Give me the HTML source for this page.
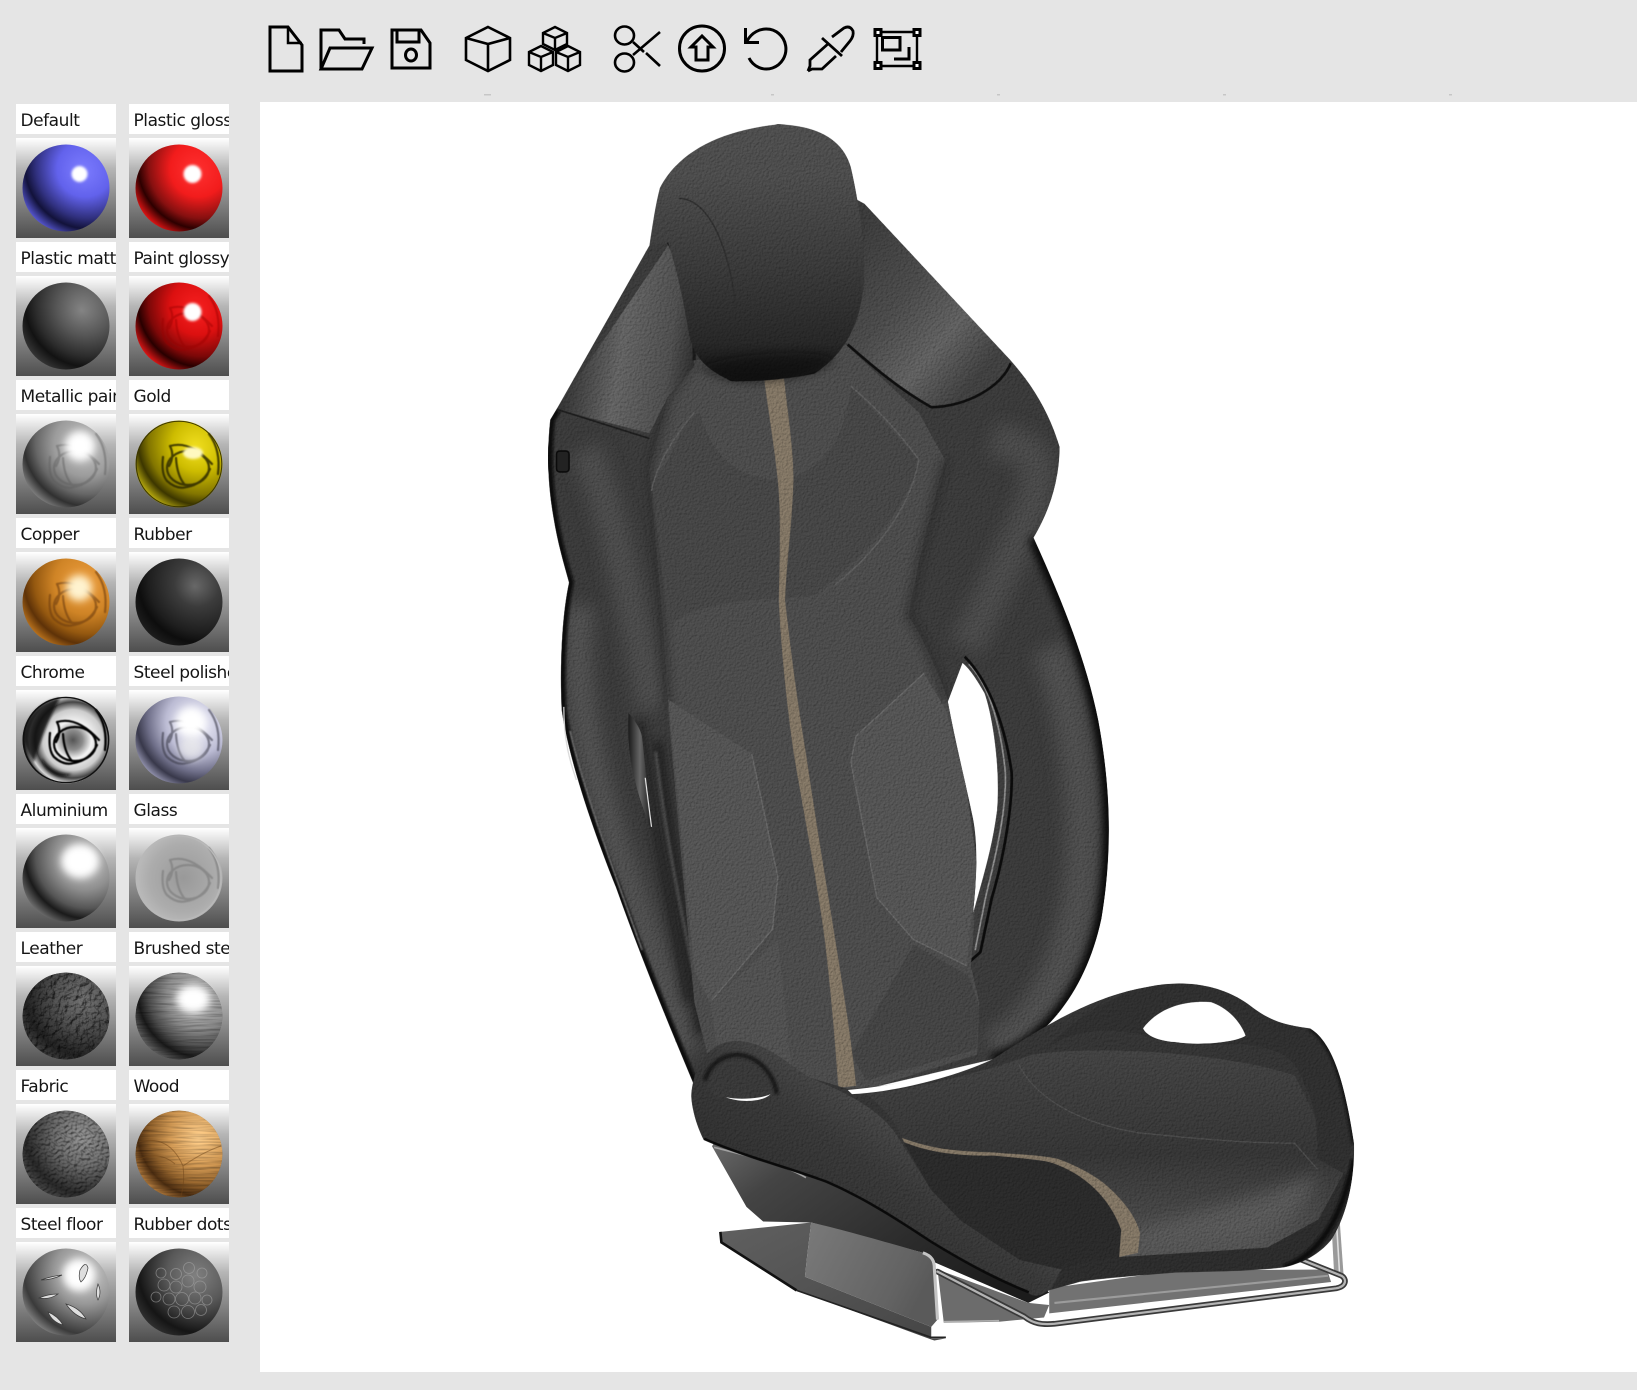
<!DOCTYPE html>
<html><head><meta charset="utf-8"><title>Material viewer</title>
<style>
html,body{margin:0;padding:0;background:#e5e5e5;width:1637px;height:1390px;overflow:hidden}
#view{position:absolute;left:260px;top:102px;width:1377px;height:1270px;background:#fff}
svg{position:absolute;left:0;top:0}
.l{position:absolute;width:95.5px;height:30px;padding-left:4.5px;background:#fff;overflow:hidden;white-space:nowrap;font:17px/34px "DejaVu Sans",sans-serif;letter-spacing:-.45px;color:#151515}
</style></head><body>
<div id="view"></div>
<div class="l" style="left:16px;top:104px">Default</div><div class="l" style="left:129px;top:104px">Plastic glossy</div>
<div class="l" style="left:16px;top:242px">Plastic matt</div><div class="l" style="left:129px;top:242px">Paint glossy</div>
<div class="l" style="left:16px;top:380px">Metallic paint</div><div class="l" style="left:129px;top:380px">Gold</div>
<div class="l" style="left:16px;top:518px">Copper</div><div class="l" style="left:129px;top:518px">Rubber</div>
<div class="l" style="left:16px;top:656px">Chrome</div><div class="l" style="left:129px;top:656px">Steel polished</div>
<div class="l" style="left:16px;top:794px">Aluminium</div><div class="l" style="left:129px;top:794px">Glass</div>
<div class="l" style="left:16px;top:932px">Leather</div><div class="l" style="left:129px;top:932px">Brushed steel</div>
<div class="l" style="left:16px;top:1070px">Fabric</div><div class="l" style="left:129px;top:1070px">Wood</div>
<div class="l" style="left:16px;top:1208px">Steel floor</div><div class="l" style="left:129px;top:1208px">Rubber dots</div>

<svg width="1637" height="1390" viewBox="0 0 1637 1390" xmlns="http://www.w3.org/2000/svg">
<defs>
<linearGradient id="bg" x1="0" y1="0" x2="0" y2="1"><stop offset="0" stop-color="#fff"/><stop offset=".08" stop-color="#ececec"/><stop offset=".3" stop-color="#b6b6b6"/><stop offset=".6" stop-color="#8a8a8a"/><stop offset="1" stop-color="#4e4e4e"/></linearGradient>
<radialGradient id="m1" cx=".8" cy=".2" r="1" fx=".68" fy=".32"><stop offset="0" stop-color="#7c7cff"/><stop offset=".32" stop-color="#6262ec"/><stop offset=".6" stop-color="#30307e"/><stop offset=".74" stop-color="#12123a"/><stop offset=".92" stop-color="#5a5ad8"/></radialGradient>
<radialGradient id="m2" cx=".8" cy=".2" r="1" fx=".68" fy=".32"><stop offset="0" stop-color="#ff3030"/><stop offset=".32" stop-color="#f21c1c"/><stop offset=".6" stop-color="#861010"/><stop offset=".74" stop-color="#2c0000"/><stop offset=".92" stop-color="#ec1616"/></radialGradient>
<radialGradient id="m3" cx=".8" cy=".2" r="1" fx=".68" fy=".32"><stop offset="0" stop-color="#848484"/><stop offset=".32" stop-color="#575757"/><stop offset=".6" stop-color="#2c2c2c"/><stop offset=".74" stop-color="#121212"/><stop offset=".95" stop-color="#3e3e3e"/></radialGradient>
<radialGradient id="m4" cx=".8" cy=".2" r="1" fx=".68" fy=".32"><stop offset="0" stop-color="#f82020"/><stop offset=".32" stop-color="#dc1010"/><stop offset=".6" stop-color="#7c0808"/><stop offset=".74" stop-color="#280000"/><stop offset=".92" stop-color="#e81818"/></radialGradient>
<radialGradient id="m5" cx=".8" cy=".2" r="1" fx=".68" fy=".32"><stop offset="0" stop-color="#c4c4c4"/><stop offset=".36" stop-color="#9c9c9c"/><stop offset=".6" stop-color="#666"/><stop offset=".76" stop-color="#303030"/><stop offset=".95" stop-color="#929292"/></radialGradient>
<radialGradient id="m6" cx=".8" cy=".2" r="1" fx=".68" fy=".32"><stop offset="0" stop-color="#f2e020"/><stop offset=".3" stop-color="#cdbc00"/><stop offset=".6" stop-color="#827500"/><stop offset=".74" stop-color="#3c3600"/><stop offset=".95" stop-color="#e4d414"/></radialGradient>
<radialGradient id="m7" cx=".8" cy=".2" r="1" fx=".68" fy=".32"><stop offset="0" stop-color="#f0a040"/><stop offset=".36" stop-color="#cf8426"/><stop offset=".62" stop-color="#945810"/><stop offset=".76" stop-color="#5e3208"/><stop offset=".95" stop-color="#d08222"/></radialGradient>
<radialGradient id="m8" cx=".8" cy=".2" r="1" fx=".68" fy=".32"><stop offset="0" stop-color="#686868"/><stop offset=".26" stop-color="#3c3c3c"/><stop offset=".6" stop-color="#1e1e1e"/><stop offset=".74" stop-color="#0d0d0d"/><stop offset=".95" stop-color="#222"/></radialGradient>
<radialGradient id="m9" cx=".58" cy=".5" r=".56"><stop offset="0" stop-color="#555"/><stop offset=".2" stop-color="#8c8c8c"/><stop offset=".38" stop-color="#f2f2f2"/><stop offset=".62" stop-color="#ccc"/><stop offset=".78" stop-color="#444"/><stop offset=".9" stop-color="#d8d8d8"/><stop offset="1" stop-color="#222"/></radialGradient>
<radialGradient id="m10" cx=".8" cy=".2" r="1" fx=".66" fy=".36"><stop offset="0" stop-color="#f6f6ff"/><stop offset=".36" stop-color="#bcbcd4"/><stop offset=".6" stop-color="#70708a"/><stop offset=".76" stop-color="#38384a"/><stop offset=".95" stop-color="#acacca"/></radialGradient>
<radialGradient id="m11" cx=".8" cy=".2" r="1" fx=".68" fy=".32"><stop offset="0" stop-color="#ccc"/><stop offset=".36" stop-color="#8e8e8e"/><stop offset=".6" stop-color="#555"/><stop offset=".74" stop-color="#1a1a1a"/><stop offset=".95" stop-color="#808080"/></radialGradient>
<radialGradient id="m12" cx=".55" cy=".5" r=".65"><stop offset="0" stop-color="#999"/><stop offset=".6" stop-color="#acacac"/><stop offset="1" stop-color="#c4c4c4"/></radialGradient>
<radialGradient id="m13" cx=".8" cy=".2" r="1" fx=".68" fy=".32"><stop offset="0" stop-color="#666"/><stop offset=".36" stop-color="#4a4a4a"/><stop offset=".74" stop-color="#1f1f1f"/><stop offset=".95" stop-color="#404040"/></radialGradient>
<radialGradient id="m14" cx=".8" cy=".2" r="1" fx=".68" fy=".32"><stop offset="0" stop-color="#b0b0b0"/><stop offset=".36" stop-color="#888"/><stop offset=".6" stop-color="#4a4a4a"/><stop offset=".74" stop-color="#181818"/><stop offset=".95" stop-color="#6c6c6c"/></radialGradient>
<radialGradient id="m15" cx=".8" cy=".2" r="1" fx=".68" fy=".32"><stop offset="0" stop-color="#848484"/><stop offset=".36" stop-color="#626262"/><stop offset=".74" stop-color="#252525"/><stop offset=".95" stop-color="#464646"/></radialGradient>
<radialGradient id="m16" cx=".8" cy=".2" r="1" fx=".72" fy=".32"><stop offset="0" stop-color="#f2c484"/><stop offset=".36" stop-color="#c89250"/><stop offset=".6" stop-color="#8c5e2a"/><stop offset=".76" stop-color="#4a2c10"/><stop offset=".95" stop-color="#c08644"/></radialGradient>
<radialGradient id="m17" cx=".8" cy=".2" r="1" fx=".68" fy=".32"><stop offset="0" stop-color="#d0d0d0"/><stop offset=".36" stop-color="#989898"/><stop offset=".76" stop-color="#3a3a3a"/><stop offset=".95" stop-color="#909090"/></radialGradient>
<radialGradient id="m18" cx=".8" cy=".2" r="1" fx=".68" fy=".32"><stop offset="0" stop-color="#808080"/><stop offset=".36" stop-color="#585858"/><stop offset=".74" stop-color="#151515"/><stop offset=".95" stop-color="#363636"/></radialGradient>
<filter id="b05" x="-10%" y="-10%" width="120%" height="120%"><feGaussianBlur stdDeviation=".45"/></filter>
<filter id="b1" x="-30%" y="-30%" width="160%" height="160%"><feGaussianBlur stdDeviation="1.2"/></filter>
<filter id="b3" x="-60%" y="-60%" width="220%" height="220%"><feGaussianBlur stdDeviation="4"/></filter>
<filter id="b8" x="-40%" y="-40%" width="180%" height="180%"><feGaussianBlur stdDeviation="8"/></filter>
<filter id="tLea" x="0" y="0" width="100%" height="100%" color-interpolation-filters="sRGB"><feTurbulence type="fractalNoise" baseFrequency=".16" numOctaves="3" seed="4" result="n"/><feDiffuseLighting in="n" surfaceScale="2.8" diffuseConstant="1" lighting-color="#fff" result="l"><feDistantLight azimuth="45" elevation="65"/></feDiffuseLighting><feComposite in="SourceGraphic" in2="l" operator="arithmetic" k1="1.15" result="c"/><feComposite in="c" in2="SourceAlpha" operator="in"/></filter>
<filter id="tFab" x="0" y="0" width="100%" height="100%" color-interpolation-filters="sRGB"><feTurbulence type="fractalNoise" baseFrequency=".3 .34" numOctaves="1" seed="9" result="n"/><feDiffuseLighting in="n" surfaceScale="1.7" diffuseConstant="1" lighting-color="#fff" result="l"><feDistantLight azimuth="60" elevation="65"/></feDiffuseLighting><feComposite in="SourceGraphic" in2="l" operator="arithmetic" k1="1.15" result="c"/><feComposite in="c" in2="SourceAlpha" operator="in"/></filter>
<filter id="tBr" x="0" y="0" width="100%" height="100%" color-interpolation-filters="sRGB"><feTurbulence type="fractalNoise" baseFrequency=".03 .35" numOctaves="2" seed="2" result="n"/><feDiffuseLighting in="n" surfaceScale=".6" diffuseConstant="1" lighting-color="#fff" result="l"><feDistantLight azimuth="90" elevation="65"/></feDiffuseLighting><feComposite in="SourceGraphic" in2="l" operator="arithmetic" k1="1.1" result="c"/><feComposite in="c" in2="SourceAlpha" operator="in"/></filter>
<filter id="lea" x="0" y="0" width="100%" height="100%" color-interpolation-filters="sRGB"><feTurbulence type="fractalNoise" baseFrequency=".42" numOctaves="2" seed="3" result="n"/><feDiffuseLighting in="n" surfaceScale=".5" diffuseConstant="1" lighting-color="#fff" result="l"><feDistantLight azimuth="45" elevation="65"/></feDiffuseLighting><feComposite in="SourceGraphic" in2="l" operator="arithmetic" k1="1.12" result="c"/><feComposite in="c" in2="SourceAlpha" operator="in"/></filter>
<g id="arcs" fill="none" stroke-width="2.2" stroke-linecap="round" filter="url(#b05)"><ellipse cx="9" cy="4" rx="21" ry="17"/><path d="M-16-7Q-18 10-12 17Q-2 26 8 23Q24 20 31 5"/><path d="M-9-18Q-4-8-10 2"/><path d="M-9-18Q11-24 33 0"/><path d="M-3-6Q-2 12 6 21"/><path d="M30-30Q42-14 39 10"/></g>

<linearGradient id="head" x1="0" y1="0" x2="0" y2="1"><stop offset="0" stop-color="#4e4e4e"/><stop offset=".2" stop-color="#4c4c4c"/><stop offset=".55" stop-color="#3a3a3a"/><stop offset=".85" stop-color="#272727"/><stop offset="1" stop-color="#101010"/></linearGradient>
<linearGradient id="wl" x1="0" y1=".55" x2="1" y2=".75"><stop offset="0" stop-color="#2a2a2a"/><stop offset=".45" stop-color="#626262"/><stop offset=".8" stop-color="#4e4e4e"/><stop offset="1" stop-color="#2a2a2a"/></linearGradient>
<linearGradient id="wr" x1="0" y1=".1" x2=".75" y2=".9"><stop offset="0" stop-color="#3a3a3a"/><stop offset=".45" stop-color="#4a4a4a"/><stop offset=".75" stop-color="#606060"/><stop offset="1" stop-color="#404040"/></linearGradient>
<linearGradient id="shell" x1="0" y1="0" x2="1" y2=".7"><stop offset="0" stop-color="#6e6e6e"/><stop offset=".25" stop-color="#444"/><stop offset=".7" stop-color="#2b2b2b"/><stop offset="1" stop-color="#1c1c1c"/></linearGradient>
<linearGradient id="bracket" x1="0" y1="0" x2="1" y2=".4"><stop offset="0" stop-color="#7a7a7a"/><stop offset=".8" stop-color="#636363"/><stop offset="1" stop-color="#5a5a5a"/></linearGradient>
<linearGradient id="plate" x1="0" y1="0" x2="1" y2="1"><stop offset="0" stop-color="#606060"/><stop offset="1" stop-color="#454545"/></linearGradient>
<linearGradient id="panelR" x1="0" y1="0" x2="0" y2="1"><stop offset="0" stop-color="#424242"/><stop offset=".5" stop-color="#353535"/><stop offset="1" stop-color="#525252"/></linearGradient>
<linearGradient id="armL" x1="0" y1="1" x2="1" y2="0"><stop offset="0" stop-color="#222"/><stop offset=".5" stop-color="#383838"/><stop offset=".8" stop-color="#5c5c5c"/><stop offset="1" stop-color="#3a3a3a"/></linearGradient>
<linearGradient id="strip" x1="0" y1="0" x2="1" y2="0"><stop offset="0" stop-color="#1a1a1a"/><stop offset=".5" stop-color="#666"/><stop offset="1" stop-color="#1a1a1a"/></linearGradient>
<clipPath id="cBack"><path clip-rule="evenodd" d="M622 235L533 392L527 402C524 430 524 460 530 495C534 520 540 540 545 558C538 590 536 640 538 680C545 730 570 800 590 850C615 920 640 980 665 1040L800 1050L950 1015C1000 1000 1040 950 1055 880C1065 820 1065 760 1052 690C1040 630 1015 570 990 515C1005 490 1015 460 1015 428C1005 395 990 370 968 345L828 195L800 180ZM922 635L908 672C915 710 925 750 931 779C936 800 937 830 932 875C940 845 950 815 955 776C958 740 952 690 943 664C936 652 930 642 922 635Z"/></clipPath>
<clipPath id="cCush"><path clip-rule="evenodd" d="M662 1050C664 1020 680 998 705 997C735 998 755 1020 775 1032L812 1043C860 1040 910 1030 950 1015C990 990 1040 955 1100 945C1140 937 1175 945 1200 965C1220 980 1235 982 1255 985C1280 1000 1290 1050 1297 1095C1298 1130 1290 1165 1275 1188C1262 1203 1247 1210 1230 1214C1200 1218 1160 1218 1126 1219C1090 1222 1050 1225 1034 1228C1020 1232 1012 1234 1005 1236C995 1243 990 1242 985 1239C950 1225 920 1208 892 1191C860 1170 830 1150 791 1133C750 1118 710 1108 674 1092C668 1080 663 1065 662 1050ZM1095 985C1110 965 1135 958 1160 960C1175 965 1188 978 1193 992C1185 998 1150 1002 1125 998C1110 997 1098 992 1095 985Z"/></clipPath>
</defs>

<!-- toolbar icons -->
<g fill="none" stroke="#000" stroke-width="3" stroke-linejoin="miter">
<path d="M270 27H288L302 45V71H270Z"/><path d="M288 27V43H302" stroke-width="2.5"/>
<path d="M321 69V30H339L345 39H364V44" stroke-width="3"/><path d="M321 69L330 48H372L362 69Z" stroke-width="3"/>
<path d="M392 30H421L430 43V68H392Z"/><path d="M397 30V42H419V30"/><ellipse cx="411" cy="55" rx="5.5" ry="6"/>
<g stroke-width="2.6"><path d="M488 27L510 38V60L488 71L466 60V38Z"/><path d="M466 38L488 44L510 38M488 44V71"/></g>
<g stroke-width="2.4"><path d="M555 27L567 33V44L555 50L543 44V33Z"/><path d="M543 33L555 38L567 33M555 38V50"/><path d="M541 46L553 52V65L541 71L529 65V52Z"/><path d="M529 52L541 57L553 52M541 57V71"/><path d="M568 46L580 52V65L568 71L556 65V52Z"/><path d="M556 52L568 57L580 52M568 57V71"/></g>
<g stroke-width="2.6"><ellipse cx="624.5" cy="35.5" rx="9.5" ry="9"/><ellipse cx="624.5" cy="62.5" rx="9.5" ry="9"/><path d="M660 32L633 55M633 42L644 52M646 53L660 66"/></g>
<circle cx="702" cy="48.5" r="22.5"/><path d="M702 36L691 47H696V60H708V47H713Z"/>
<path d="M745.5 28V42.5H759"/><path d="M747 41C752 32 760 29 766 29A19.5 20 0 1 1 749 58"/>
<g stroke-width="2.8"><path d="M832 37L844 28Q850 25 853 31Q854 36 850 41L841 52"/><path d="M822 38L842 56"/><path d="M829 43L810 60V66L808 71"/><path d="M836 56L822 69H812L808 71"/></g>
<path d="M876 32H918M876 66H918" stroke-width="2.4"/><path d="M877 33V65M917 33V65" stroke-width="2.4"/><path d="M882.5 37.5H900V50H882.5Z"/><path d="M909 47V59H894"/>
</g>
<g fill="#fff" stroke="#000" stroke-width="3"><rect x="875" y="29.5" width="6" height="6"/><rect x="914" y="29.5" width="6" height="6"/><rect x="875" y="62.5" width="6" height="6"/><rect x="914" y="62.5" width="6" height="6"/></g>
<g fill="#c6c6c6"><rect x="484" y="94" width="7" height="1.5"/><rect x="771" y="94" width="3" height="1.5"/><rect x="997" y="94" width="3" height="1.5"/><rect x="1223" y="94" width="3" height="1.5"/><rect x="1449" y="94" width="3" height="1.5"/></g>

<!-- swatch backgrounds -->
<g fill="url(#bg)">
<rect x="16" y="138" width="100" height="100"/><rect x="129" y="138" width="100" height="100"/>
<rect x="16" y="276" width="100" height="100"/><rect x="129" y="276" width="100" height="100"/>
<rect x="16" y="414" width="100" height="100"/><rect x="129" y="414" width="100" height="100"/>
<rect x="16" y="552" width="100" height="100"/><rect x="129" y="552" width="100" height="100"/>
<rect x="16" y="690" width="100" height="100"/><rect x="129" y="690" width="100" height="100"/>
<rect x="16" y="828" width="100" height="100"/><rect x="129" y="828" width="100" height="100"/>
<rect x="16" y="966" width="100" height="100"/><rect x="129" y="966" width="100" height="100"/>
<rect x="16" y="1104" width="100" height="100"/><rect x="129" y="1104" width="100" height="100"/>
<rect x="16" y="1242" width="100" height="100"/><rect x="129" y="1242" width="100" height="100"/>
</g>
<!-- spheres -->
<g transform="translate(66 188)"><circle r="43.5" fill="url(#m1)"/><circle cx="13.5" cy="-14" r="8" fill="#fff" filter="url(#b1)"/></g>
<g transform="translate(179 188)"><circle r="43.5" fill="url(#m2)"/><circle cx="13.5" cy="-14" r="9" fill="#fff" filter="url(#b1)"/></g>
<g transform="translate(66 326)"><circle r="43.5" fill="url(#m3)"/></g>
<g transform="translate(179 326)"><circle r="43.5" fill="url(#m4)"/><use href="#arcs" stroke="#900" opacity=".45"/><circle cx="13.5" cy="-14" r="9" fill="#fff" filter="url(#b1)"/></g>
<g transform="translate(66 464)"><circle r="43.5" fill="url(#m5)"/><use href="#arcs" stroke="#5c5c5c" opacity=".45"/><circle cx="14" cy="-18" r="15" fill="#fff" filter="url(#b3)"/></g>
<g transform="translate(179 464)"><circle r="43.5" fill="url(#m6)"/><use href="#arcs" stroke="#2e2a00" opacity=".85"/><ellipse cx="14" cy="-11" rx="10" ry="6" fill="#fff9c0" filter="url(#b1)"/><circle r="42.8" fill="none" stroke="#3a3500" stroke-width="1"/></g>
<g transform="translate(66 602)"><circle r="43.5" fill="url(#m7)"/><use href="#arcs" stroke="#6e3c0c" opacity=".6"/><circle cx="13" cy="-14" r="13" fill="#fff3cf" filter="url(#b3)"/></g>
<g transform="translate(179 602)"><circle r="43.5" fill="url(#m8)"/></g>
<g transform="translate(66 740)"><circle r="43.5" fill="url(#m9)"/><path d="M-42-2A42 42 0 0 1-6-42Q-22-12-32 22Q-42 8-42-2Z" fill="#0c0c0c" opacity=".85" filter="url(#b1)"/><path d="M-24 18Q-14 34 6 34Q-6 40-16 32Q-24 26-24 18Z" fill="#0c0c0c" opacity=".85" filter="url(#b1)"/><use href="#arcs" stroke="#000"/><circle r="42.6" fill="none" stroke="#111" stroke-width="1.4"/></g>
<g transform="translate(179 740)"><circle r="43.5" fill="url(#m10)"/><use href="#arcs" stroke="#3a3a48" opacity=".6"/><circle cx="12" cy="-18" r="15" fill="#fff" filter="url(#b3)"/><circle cx="12" cy="8" r="12" fill="#eee" opacity=".7" filter="url(#b3)"/></g>
<g transform="translate(66 878)"><circle r="43.5" fill="url(#m11)"/><ellipse cx="14" cy="-17" rx="19" ry="17" fill="#fff" filter="url(#b3)"/></g>
<g transform="translate(179 878)"><circle r="43.5" fill="url(#m12)"/><use href="#arcs" stroke="#7e7e7e" opacity=".7"/><circle r="42" fill="none" stroke="#b8b8b8" stroke-width="1.4"/></g>
<g transform="translate(66 1016)"><circle r="43.5" fill="url(#m13)" filter="url(#tLea)"/></g>
<g transform="translate(179 1016)"><circle r="43.5" fill="url(#m14)" filter="url(#tBr)"/><ellipse cx="14" cy="-17" rx="17" ry="14" fill="#fff" filter="url(#b3)"/></g>
<g transform="translate(66 1154)"><circle r="43.5" fill="url(#m15)" filter="url(#tFab)"/></g>
<g transform="translate(179 1154)"><circle r="43.5" fill="url(#m16)" filter="url(#tBr)"/><path d="M-40-12Q-10-20 4 12Q6 28 2 42M4 12Q24-2 42-8M-42 6Q-20-4-4 10" fill="none" stroke="#6e4318" stroke-width="1" opacity=".5"/></g>
<g transform="translate(66 1292)"><circle r="43.5" fill="url(#m17)"/><circle cx="13" cy="-17" r="16" fill="#fff" filter="url(#b3)"/><path d="M-25-12Q-14-16-4-17Q-14-12-25-12ZM-27 6Q-18 2-8 2Q-16 8-27 6ZM0 12Q14 16 20 27Q8 24 0 12ZM-18 20Q-8 24-3 33Q-14 30-18 20ZM14-22Q20-32 22-24Q20-14 15-10Q12-14 14-22ZM32-8Q36 0 32 8Q29 2 32-8Z" fill="#dedede" stroke="#3c3c3c" stroke-width=".7"/></g>
<g transform="translate(179 1292)"><circle r="43.5" fill="url(#m18)"/><g fill="none" stroke="#a8a8a8" stroke-width=".8" opacity=".6"><circle cx="-3" cy="-5" r="6"/><circle cx="9" cy="-11" r="6"/><circle cx="21" cy="-5" r="6"/><circle cx="3" cy="7" r="6.5"/><circle cx="16" cy="6" r="6"/><circle cx="28" cy="8" r="5"/><circle cx="-10" cy="7" r="6"/><circle cx="-15" cy="-7" r="6"/><circle cx="-3" cy="-18" r="5.5"/><circle cx="10" cy="-24" r="5.5"/><circle cx="23" cy="-19" r="5"/><circle cx="9" cy="20" r="6.5"/><circle cx="-5" cy="20" r="6"/><circle cx="22" cy="18" r="5.5"/><circle cx="-18" cy="-19" r="5"/><circle cx="-23" cy="5" r="5"/></g></g>

<!-- seat -->
<g transform="scale(1.04400)">
 <!-- frame -->
 <path d="M690 1180L777 1171L773 1204L771 1223L892 1271L892 1282H906L895 1284L892 1283L763 1236L691 1190Z" fill="url(#plate)"/>
 <path d="M690 1180L691 1190L763 1236" fill="none" stroke="#111" stroke-width="2.5"/>
 <path d="M763 1236L892 1281L906 1281" fill="none" stroke="#222" stroke-width="1.6"/>
 <path d="M682 1098L715 1156L731 1170L777 1171L884 1200L895 1209L985 1248L1005 1238L950 1190L800 1110L690 1085Z" fill="url(#shell)"/>
 <path d="M684 1099C720 1108 750 1115 772 1128" fill="none" stroke="#a0a0a0" stroke-width="1.6"/>
 <path d="M898 1216L985 1248L1005 1250L1000 1262L957 1266L904 1267Z" fill="#6c6c6c"/>
 <path d="M904 1266L957 1265" stroke="#b0b0b0" stroke-width="1.5" fill="none"/>
 <path d="M1005 1234L1126 1217L1271 1216L1275 1228L1005 1258Z" fill="#727272"/>
 <path d="M1010 1248L1272 1222" stroke="#9c9c9c" stroke-width="2" fill="none"/>
 <path d="M1275 1166L1283 1166L1287 1222L1278 1222Z" fill="#9a9a9a"/>
 <path d="M1280 1168L1283 1218" stroke="#e0e0e0" stroke-width="1.5" fill="none"/>
 <path d="M1235 1202L1285 1222" stroke="#777" stroke-width="4" fill="none"/>
 <g fill="none" stroke-linecap="round" stroke-linejoin="round">
  <path d="M898 1218L981 1261C990 1268 998 1269 1010 1268L1280 1234C1290 1232 1290 1225 1285 1222L1235 1202" stroke="#3a3a3a" stroke-width="5.5"/>
  <path d="M898 1218L981 1261C990 1268 998 1269 1010 1268L1280 1234C1290 1232 1290 1225 1285 1222L1235 1202" stroke="#b4b4b4" stroke-width="2.2"/>
 </g>
 <path d="M777 1171C800 1176 850 1190 884 1200C893 1203 895 1208 895 1215L898 1264L892 1271L771 1223L773 1204Z" fill="url(#bracket)"/>
 <path d="M884 1200C893 1203 895 1208 895 1215L898 1264" fill="none" stroke="#c4c4c4" stroke-width="3"/>

 <g filter="url(#lea)">
 <!-- backrest -->
 <g clip-path="url(#cBack)">
  <rect x="500" y="150" width="600" height="920" fill="#3a3a3a"/>
  <path d="M556 580C548 640 560 720 590 810C610 870 640 950 655 1010" fill="none" stroke="#505050" stroke-width="28" filter="url(#b8)"/>
  <path d="M1005 620C1035 700 1045 800 1030 880C1015 940 990 985 950 1005" fill="none" stroke="#4e4e4e" stroke-width="34" filter="url(#b8)"/>
  <path d="M950 420C985 430 1000 430 990 480C965 540 945 580 925 620" fill="none" stroke="#484848" stroke-width="34" filter="url(#b8)"/>
  <path d="M560 430C580 470 600 550 625 680" fill="none" stroke="#4c4c4c" stroke-width="30" filter="url(#b8)"/>
  <path d="M533 392L527 402C524 430 524 460 530 495C534 520 540 540 545 558C538 590 536 640 538 680C545 730 570 800 590 850C615 920 640 980 665 1040" fill="none" stroke="#080808" stroke-width="9" filter="url(#b1)"/>
  <path d="M546 700C560 760 590 840 615 910" fill="none" stroke="#6a6a6a" stroke-width="1.6" filter="url(#b05)"/>
  <path d="M990 515C1015 570 1040 630 1052 690C1065 760 1065 820 1055 880C1040 950 1000 1000 950 1015" fill="none" stroke="#060606" stroke-width="10" filter="url(#b3)"/>
  <path d="M630 710C640 790 655 880 672 990" fill="none" stroke="#202020" stroke-width="10" filter="url(#b3)"/>
  <path d="M612 690C622 760 640 860 660 960" fill="none" stroke="#202020" stroke-width="8" filter="url(#b3)"/>
  <path d="M628 720C636 790 650 860 664 930" fill="none" stroke="#5a5a5a" stroke-width="2" filter="url(#b1)"/>
  <!-- strip right of hole -->
  <path d="M924 629C945 650 962 690 969 740C970 770 962 820 950 860L939 912L929 921C927 905 929 890 932 875C940 845 950 815 955 776C958 740 952 690 943 664C936 652 930 642 922 635Z" fill="#3c3c3c"/>
  <path d="M928 636C946 655 958 690 963 740C964 775 955 815 945 855L934 910" fill="none" stroke="#8c8c8c" stroke-width="1.6"/>
  <path d="M924 629C945 650 962 690 969 740C970 770 962 820 950 860L939 912L929 921" fill="none" stroke="#0b0b0b" stroke-width="2.6"/>
  <!-- centre -->
  <path d="M665 345L640 380L622 450L635 600L640 680L665 960L680 1020L810 1050L936 1010L938 960L930 925C934 880 937 830 932 800C925 750 915 710 908 672C905 660 885 610 870 590L882 530L905 440L880 395L810 330Z" fill="#4b4b4b"/>
  <path d="M665 345L640 380L622 450L635 600L640 680M905 440L882 530L870 590C885 610 900 650 906 672" fill="none" stroke="#2a2a2a" stroke-width="5" filter="url(#b3)"/>
  <path d="M660 400L625 470L640 600C670 570 760 575 780 570C820 540 870 490 880 440L815 370C810 420 790 450 750 460C700 460 680 430 670 395Z" fill="#454545"/>
  <path d="M665 395C640 425 628 450 624 470M815 370C845 395 865 420 880 440C875 475 850 520 800 560" fill="none" stroke="#5c5c5c" stroke-width="1.4"/>
  <path d="M640 670L720 722L745 840L740 890L680 960L665 930Z" fill="#535353"/>
  <path d="M885 645L820 705L815 730L840 860L875 900L926 925L936 830L925 750L906 680Z" fill="#535353"/>
  <path d="M720 722L745 840L740 890L682 958M885 645L820 705L815 730L840 860L875 900L926 925" fill="none" stroke="#656565" stroke-width="1.3"/>
  <path d="M680 960L745 900L760 1040L690 1025Z" fill="#505050"/>
  <path d="M875 905L928 935L938 965L935 1005L830 1035L815 1010Z" fill="#434343"/>
  <path d="M732 363L751 363C755 400 760 430 760 460C759 500 753 540 752 575C758 630 765 680 772 722C782 790 792 850 800 900C808 950 816 1000 820 1040L803 1042C800 1000 796 950 790 900C782 840 770 780 760 720C753 670 748 620 746 575C747 530 748 490 745 460C742 430 736 395 732 363Z" fill="#807463"/>
  <!-- wings -->
  <path d="M640 235L655 270L665 350L640 380L622 415L533 392Z" fill="url(#wl)"/>
  <path d="M533 392L622 420" fill="none" stroke="#1c1c1c" stroke-width="1.5"/>
  <path d="M640 232C660 260 665 320 665 345" fill="none" stroke="#1a1a1a" stroke-width="3"/>
  <path d="M828 195L968 345C960 370 925 390 890 390C860 370 830 345 810 328C825 300 830 240 828 195Z" fill="url(#wr)"/>
  <path d="M968 348C960 370 925 390 892 390C860 372 835 350 812 330" fill="none" stroke="#0e0e0e" stroke-width="2.5"/>
 </g>
 <!-- headrest -->
 <path d="M632 180C650 145 690 125 745 119C785 120 808 135 815 160C822 190 828 230 828 255C828 300 815 335 780 358C750 364 720 366 700 365C680 355 665 345 660 320C655 290 650 265 640 232L622 235C625 215 628 195 632 180Z" fill="url(#head)"/>
 <path d="M670 352C690 364 705 366 720 366C750 366 780 360 800 345C790 335 710 335 670 352Z" fill="#0c0c0c" opacity=".5" filter="url(#b3)"/>
 <path d="M650 190C680 190 700 240 705 300" fill="none" stroke="#2e2e2e" stroke-width="1.4"/>
 <!-- cushion -->
 <g clip-path="url(#cCush)">
  <rect x="650" y="930" width="660" height="320" fill="#343434"/>
  <path d="M830 1048C900 1040 960 1020 990 1010C1060 1000 1180 1010 1240 1030L1287 1124L1263 1168L1214 1195L1154 1199L1074 1204L1072 1204L1074 1178C1060 1140 1030 1120 1005 1113L866 1095C860 1075 845 1060 830 1048Z" fill="url(#panelR)"/>
  <path d="M975 1018C990 1050 1030 1075 1090 1085C1140 1090 1190 1095 1240 1095L1262 1120" fill="none" stroke="#4c4c4c" stroke-width="1.2"/>
  <path d="M1090 1180C1130 1165 1200 1150 1262 1125C1250 1165 1225 1185 1190 1192L1084 1200Z" fill="#565656" filter="url(#b8)"/>
  <path d="M866 1095L953 1106L1005 1113C1030 1120 1060 1140 1074 1178L1072 1204L1034 1209L1017 1216L977 1207L920 1169L892 1140Z" fill="#2a2a2a"/>
  <path d="M662 1050C664 1020 680 998 705 997C735 998 755 1020 775 1032C815 1048 845 1065 860 1089L892 1140L920 1169L977 1207L1017 1216L1005 1236C995 1243 990 1242 985 1239C950 1225 920 1208 892 1191C860 1170 830 1150 791 1133C750 1118 710 1108 674 1092C668 1080 663 1065 662 1050Z" fill="url(#armL)"/>
  <path d="M1017 1216L1034 1209L1074 1204L1154 1199L1214 1195L1263 1168L1287 1124L1300 1130L1280 1200L1230 1216L1120 1222L1034 1232L1005 1240Z" fill="#2c2c2c"/>
  <path d="M1100 945C1140 937 1175 945 1200 965C1220 980 1235 982 1255 985C1280 1000 1290 1050 1297 1095L1287 1124L1262 1110C1262 1090 1262 1060 1250 1040C1240 1010 1225 1005 1190 1000C1150 1002 1110 1000 1090 990C1060 985 1030 985 1000 1005C1030 975 1070 950 1100 945Z" fill="#2f2f2f"/>
  <path d="M1230 1214C1262 1203 1285 1170 1297 1110" fill="none" stroke="#101010" stroke-width="6" filter="url(#b1)"/>
  <path d="M1255 985C1280 1000 1290 1050 1297 1095" fill="none" stroke="#151515" stroke-width="5" filter="url(#b1)"/>
  <path d="M678 1040C680 1022 695 1012 712 1014C728 1018 738 1034 740 1046C725 1052 695 1054 684 1050Z" fill="#383838"/>
  <path d="M675 1035C680 1018 695 1008 712 1011C730 1015 742 1032 744 1048" fill="none" stroke="#151515" stroke-width="4" filter="url(#b1)"/>
  <path d="M674 1092C710 1108 750 1118 791 1133C830 1150 860 1170 892 1191C920 1208 950 1225 985 1239" fill="none" stroke="#0a0a0a" stroke-width="5"/>
  <path d="M864 1090C895 1102 925 1103 953 1104C975 1106 995 1106 1013 1110C1030 1116 1045 1124 1057 1133C1075 1148 1088 1165 1092 1181L1090 1200L1072 1204L1074 1178C1068 1162 1060 1150 1050 1140C1038 1128 1022 1118 1005 1113C990 1110 972 1109 953 1107C925 1107 895 1106 866 1094Z" fill="#807463"/>
 </g>
 </g>
 <path d="M695 1051C710 1054 730 1052 738 1048C732 1055 710 1057 695 1051Z" fill="#fff"/>
 <path d="M812 1044C860 1040 915 1027 950 1015C915 1031 860 1046 816 1048Z" fill="#fff"/>
 <path d="M540 677C540 710 546 730 552 747" fill="none" stroke="#d8d8d8" stroke-width="1.2"/>
 <!-- left slit -->
 <path d="M602 683C610 692 614 700 615 706L620 754L624 795C618 780 612 765 608 747C604 730 601 715 602 683Z" fill="url(#strip)"/>
 <path d="M618 745L624 792" fill="none" stroke="#eee" stroke-width="1.1"/>
 <rect x="533" y="432" width="12" height="20" rx="3" fill="#222" stroke="#0b0b0b" stroke-width="1.5"/>
</g>
</svg>
</body></html>
